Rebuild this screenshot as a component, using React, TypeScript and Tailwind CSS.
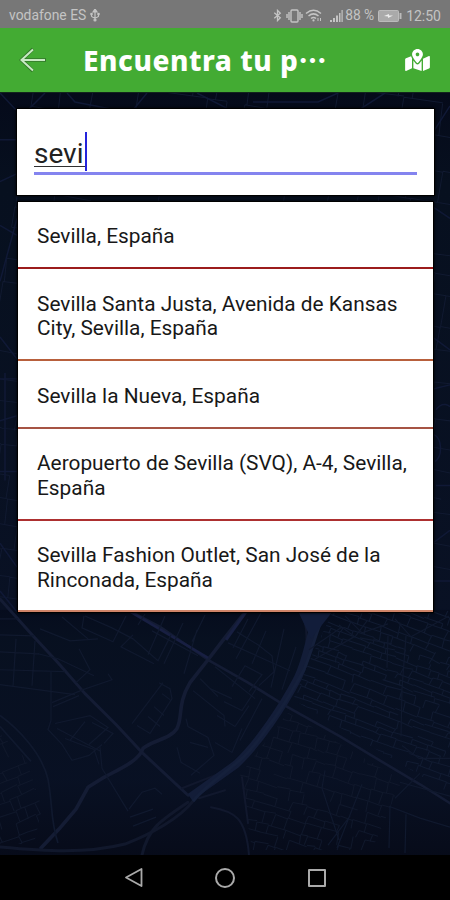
import React from "react";
import { FaMapMarkedAlt } from "react-icons/fa";

type Suggestion = { lines: string[]; box: string };

const suggestions: Suggestion[] = [
  { lines: ["Sevilla, España"], box: "h-[67px] pt-[22px] border-[#9c1c1c]" },
  {
    lines: ["Sevilla Santa Justa, Avenida de Kansas", "City, Sevilla, España"],
    box: "h-[92px] pt-[22.5px] border-[#b8603c]",
  },
  { lines: ["Sevilla la Nueva, España"], box: "h-[68px] pt-[22.5px] border-[#a65444]" },
  {
    lines: ["Aeropuerto de Sevilla (SVQ), A-4, Sevilla,", "España"],
    box: "h-[92px] pt-[22px] border-[#ad3030]",
  },
  {
    lines: ["Sevilla Fashion Outlet, San José de la", "Rinconada, España"],
    box: "h-[91px] pt-[22px] border-[#d08468]",
  },
];

// Builds an irregular street network centred on the origin: uneven rows with staggered cross streets.
function streets(seed: number, width: number, height: number, rowGap: number, blockLength: number): string {
  let state = seed;
  const random = () => {
    state = (state * 16807) % 2147483647;
    return state / 2147483647;
  };
  let d = "";
  let y = -height / 2;
  while (y < height / 2) {
    const gap = rowGap * (0.6 + random() * 0.8);
    let x = -width / 2;
    while (x < width / 2) {
      const length = blockLength * (0.5 + random());
      const drift = (random() - 0.5) * 3;
      if (random() > 0.14) d += `M${x.toFixed(1)} ${y.toFixed(1)}l${length.toFixed(1)} ${drift.toFixed(1)}`;
      if (random() > 0.25) d += `M${x.toFixed(1)} ${y.toFixed(1)}l${((random() - 0.5) * 3).toFixed(1)} ${gap.toFixed(1)}`;
      x += length;
    }
    y += gap;
  }
  return d;
}

const eastStreets = streets(71, 300, 250, 7, 17);
const southStreets = streets(193, 200, 200, 9, 14);
const westStreets = streets(37, 100, 140, 11, 15);
const edgeStreets = streets(911, 460, 640, 26, 30);

function CityMap() {
  return (
    <svg className="absolute inset-0 h-full w-full" viewBox="0 92 450 765" preserveAspectRatio="none" fill="none">
      <defs>
        <linearGradient id="night" x1="0" y1="0" x2="0" y2="1">
          <stop offset="0" stopColor="#050a1a" />
          <stop offset=".12" stopColor="#07101f" />
          <stop offset=".7" stopColor="#091124" />
          <stop offset="1" stopColor="#060814" />
        </linearGradient>
        <clipPath id="east">
          <path d="M333 612H450V795L378 752L293 701L308 665Z" />
        </clipPath>
        <clipPath id="south">
          <path d="M288 714L348 750L402 782L372 852H252L240 776Z" />
        </clipPath>
        <clipPath id="west">
          <path d="M0 735L26 760L42 810L34 846H0Z" />
        </clipPath>
      </defs>
      <rect y="92" width="450" height="765" fill="url(#night)" />
      <path d={edgeStreets} transform="translate(225 350) rotate(9)" stroke="#111a31" strokeWidth="1" />
      <rect y="611" width="450" height="246" fill="#081022" />
      <rect y="611" width="450" height="246" fill="url(#night)" opacity=".6" />
      <g clipPath="url(#east)">
        <path d={eastStreets} transform="translate(375 700) rotate(20)" stroke="#111b31" strokeWidth="1.1" />
      </g>
      <g clipPath="url(#south)">
        <path d={southStreets} transform="translate(320 785) rotate(16)" stroke="#10182b" strokeWidth="1.1" />
      </g>
      <g clipPath="url(#west)">
        <path d={westStreets} transform="translate(20 790) rotate(-22)" stroke="#10182b" strokeWidth="1.1" />
      </g>

      <g stroke="#141c34" strokeLinecap="round" strokeLinejoin="round">
        <path d="M0 600L32 636L58 664L85 695L116 726L143 755L188 797" strokeWidth="3" />
        <path d="M122 608L160 628L208 661L248 684L285 707L340 738L378 761L420 786L450 805" strokeWidth="2.6" />
        <path d="M243 616L224 640L208 661L190 684C177 706 183 718 177 730C170 741 152 742 143 750C140 762 119 771 104 779L88 789L76 811L59 831L41 850" strokeWidth="3.6" />
        <path d="M301 613C309 629 307 646 303 663M225 773L182 790M225 792L199 800M211 809C235 813 246 820 249 857M242 779L248 825" strokeWidth="2" stroke="#11182d" />
        <path d="M193 803C180 820 151 836 125 846C86 856 44 853 0 849" strokeWidth="3" stroke="#11182c" />
        <path d="M142 857C148 830 161 822 188 804" strokeWidth="3" stroke="#11182c" />
      </g>
      <path d="M319 612C309 637 309 655 298 679C283 708 259 744 236 766L190 799" stroke="#131d38" strokeWidth="8" />
      <path d="M328 612C317 625 315 645 304 671C293 691 285 706 272 723C261 737 255 748 242 760C226 774 207 786 193 803" stroke="#15203b" strokeWidth="3" />
      <path d="M298 612L333 612L311 640Z" fill="#121d3a" />
      <path d="M124 609L208 659" stroke="#181f42" strokeWidth="2.6" />
      <path d="M246 613L226 641" stroke="#171f40" strokeWidth="3" />

      <g stroke="#10192e" strokeWidth="1.2">
        <path d="M0 620H18M0 636L34 637M0 653L39 655M0 671L65 673M16 640L13 688M35 642L32 687M0 686L75 696M51 672V722M51 722L48 731L62 746L72 762L89 757L102 746M65 740L94 751L99 766" />
        <path d="M85 617L112 629L133 640L158 662L171 636M84 617L82 629L113 643L126 617M133 636L121 648L154 665M145 615L138 626M165 617L148 656M183 624L164 665M197 631L184 675M205 616L192 643M152 632L198 657" />
        <path d="M52 704L83 691L112 681L108 675M79 650L90 671L76 684M53 708L79 697M163 684L132 725M159 684L170 690L172 700L150 735L137 727M148 718L160 728M154 708L164 717M162 695L170 701" />
        <path d="M55 725L90 717L108 729L89 746M57 730L101 753M92 724L113 735L104 745M70 742L85 723M100 749L102 770L128 813M129 811L142 794L155 790L162 796M130 819L153 811M133 828L156 819M186 720L188 728L208 739L214 757L191 777M177 749L181 764L200 775M190 744L208 749M193 692L224 717L225 728M200 680L218 698" />
        <path d="M237 633L258 646L272 657L274 673L259 687M248 620L233 649M266 632L252 665M284 630L271 689M296 648L282 691M232 688L245 667L262 676L249 693M224 703L242 712L257 689M217 717L235 728L249 707M215 744L232 754L242 730" />
        <path d="M38 655L58 660L94 677M40 630L70 642L98 640M62 618L88 640M228 644L290 672M236 660L262 612M215 668L255 700M262 700L240 742M210 690L232 700" />
        <path d="M0 717C18 730 42 755 48 781C53 807 50 821 58 845M0 728L31 763" strokeWidth="1.7" />
        <path d="M406 637L402 690L401 738M388 637L387 669M402 747L419 760H450M390 808L389 850M389 808L420 820L450 829M406 816L405 855M325 772L322 790L339 842M362 786L337 850M350 818L328 847M400 784L450 798M395 800L420 775" />
        <path d="M339 626L355 638L367 622M345 617L362 634L388 625M360 639L392 645M309 651L342 628M314 661L354 638M395 620L411 638L449 617" />
      </g>

      <g stroke="#101936" strokeWidth="1.5">
        <path d="M0 92L16 109M45 92L28 109M67 92L75 101L116 109M147 92L133 109M197 92L230 109M253 101H318L338 92M359 109L385 92M434 130L450 105M434 207L450 218M434 338L450 350M434 389L450 385M436 410C443 400 450 407 450 407M434 435C442 439 443 456 435 462M436 486H450M434 543L450 531M434 582H450" />
        <path d="M0 139H17M0 181L17 173M0 225L17 235M17 218L0 281M0 337L17 359M0 379H17M0 421L17 416M0 472H17M5 373V481M0 544L17 568M0 592L17 613" />
      </g>
    </svg>
  );
}

function StatusBar() {
  return (
    <div className="flex h-7 shrink-0 items-center bg-[#777777] pt-[3px] pl-[9px] pr-[9px] font-[Roboto,sans-serif] text-[14px] leading-none text-[#c4c4c4]">
      <span className="w-[78px] whitespace-nowrap text-[13.9px]">vodafone ES</span>
      <svg className="ml-[3px] h-[13px] w-[10px]" viewBox="0 0 10 13" fill="none" stroke="currentColor" strokeWidth="1.2">
        <path d="M5 2V12M1.5 5V7Q1.5 8 5 9M8.5 5V7Q8.5 8 5 9" />
        <path d="M3 3L5 0L7 3Z" fill="currentColor" />
        <path d="M.5 4H2.5V6H.5ZM7.5 4H9.5V6H7.5Z" fill="currentColor" strokeWidth=".3" />
        <circle cx="5" cy="11" r="1" />
      </svg>
      <div className="ml-auto flex items-center">
        <svg className="h-[13px] w-[9px]" viewBox="0 0 9 14" fill="none" stroke="currentColor" strokeWidth="1.4">
          <path d="M1 4L7.5 9.5L4.5 12.5V1.5L7.5 4.5L1 10" />
        </svg>
        <svg className="ml-1 h-[14px] w-[17px]" viewBox="0 0 17 14" fill="none" stroke="currentColor" strokeWidth="1.4">
          <rect x="5" y="1" width="7" height="12" rx="1" />
          <path d="M3 3V11M1 5V9M14 3V11M16 5V9" />
        </svg>
        <svg className="ml-[2px] h-[13px] w-[17px]" viewBox="0 0 17 13" fill="none" stroke="currentColor" strokeWidth="1.5">
          <path d="M1 4.5Q8.5-2 16 4.5M3.5 7Q8.5 2.7 13.5 7M6 9.5Q8.5 7.5 11 9.5" />
          <circle cx="8.5" cy="11.4" r="1.1" fill="currentColor" stroke="none" />
          <path d="M13 9V12M15.5 9V12" strokeWidth="1" />
        </svg>
        <svg className="ml-[8px] h-3 w-[13px]" viewBox="0 0 13 12" fill="currentColor">
          <path d="M0 10H2V12H0ZM3 8H5V12H3ZM6 5.5H8V12H6ZM9 3H10.5V12H9ZM11.5 0H12.7V12H11.5Z" />
        </svg>
        <span className="ml-[2px] w-[30px] whitespace-nowrap text-[13.8px]">88 %</span>
        <svg className="ml-[3px] h-3 w-[25px]" viewBox="0 0 25 12">
          <rect x=".5" y=".5" width="20" height="11" rx="1" fill="#aaa" stroke="#bbb" />
          <path d="M6 6L11 4V5.5H15L10 8V6.5Z" fill="#ededed" />
          <path d="M22.5 3V9" stroke="#bbb" strokeWidth="2" />
        </svg>
        <span className="ml-[3px] whitespace-nowrap text-[14px]">12:50</span>
      </div>
    </div>
  );
}

function Header() {
  return (
    <header className="flex h-16 shrink-0 items-center bg-[#43ab33]">
      <svg className="ml-[19px] h-7 w-7" viewBox="0 0 28 28" fill="none">
        <path d="M27 14H3M14 3L2.5 14L14 25" stroke="#35772b" strokeWidth="3.5" />
        <path d="M26 14H3M14 3.5L2.5 14L14 24.5" stroke="#c9ebc4" strokeWidth="2" />
      </svg>
      <h1 className="ml-[36px] flex w-[250px] items-center whitespace-nowrap font-['Noto_Sans',sans-serif] text-[28px] font-extrabold leading-none tracking-[0.55px] text-white">
        Encuentra tu p
        <span className="font-['Noto_Sans_CJK_JP',sans-serif] tracking-normal">…</span>
      </h1>
      <FaMapMarkedAlt className="ml-auto mr-[20px] h-[22px] w-[25px] text-white" />
    </header>
  );
}

export default function App() {
  return (
    <div className="flex h-[900px] w-[450px] flex-col overflow-hidden bg-black">
      <StatusBar />
      <Header />
      <main className="relative h-[763px] shrink-0 overflow-hidden border-t border-[#12251b]">
        <CityMap />
        <div className="relative flex flex-col pl-4 pt-[15px] font-[Roboto,sans-serif]">
          <section className="h-[88px] w-[419px] border border-black bg-white px-[17px] pt-[23px] shadow-[0_0_3px_#000]">
            <div className="flex h-[43px] items-start border-b-[3px] border-[#8484ef]">
              <span className="h-[35px] w-[51px] border-b border-[#303030] text-[28px] leading-[43px] text-[#222]">sevi</span>
              <span className="h-[39px] w-[2px] bg-[#2424dc]" />
            </div>
          </section>
          <ul className="ml-[1px] mt-[5px] w-[417px] border border-black bg-white shadow-[0_0_3px_#000]">
            {suggestions.map(({ lines, box }) => (
              <li key={lines[0]} className={`border-b-2 pl-[19px] text-[20.85px] leading-[24.6px] text-[#181818] ${box}`}>
                {lines.map((line) => (
                  <span key={line} className="block whitespace-nowrap">{line}</span>
                ))}
              </li>
            ))}
          </ul>
        </div>
      </main>
      <nav className="flex h-[45px] items-center bg-black pl-[124px]">
        <svg className="h-[21px] w-[19px]" viewBox="0 0 19 21" fill="none" stroke="#aaa" strokeWidth="1.8">
          <path d="M17.5 2V19L2 10.5Z" strokeLinejoin="round" />
        </svg>
        <span className="ml-[72px] h-5 w-5 rounded-full border-2 border-[#aaa]" />
        <span className="ml-[73px] h-[18px] w-[18px] rounded-[1px] border-2 border-[#aaa]" />
      </nav>
    </div>
  );
}
